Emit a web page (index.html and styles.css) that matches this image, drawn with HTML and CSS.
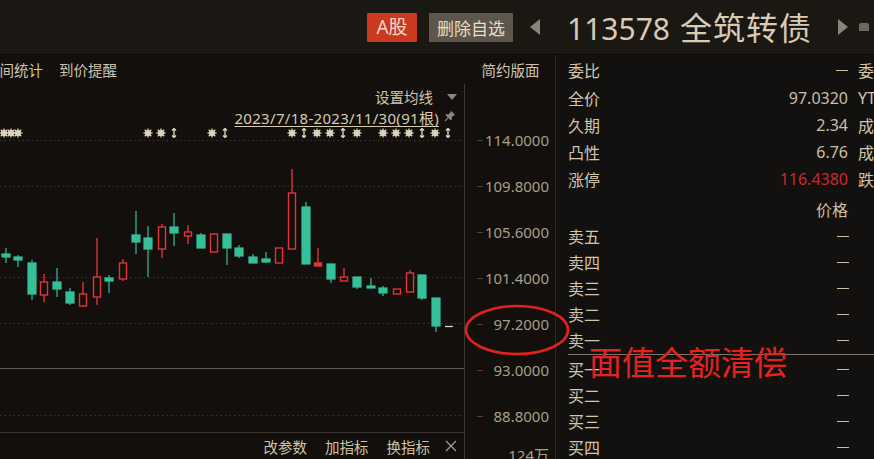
FILE: index.html
```html
<!DOCTYPE html>
<html lang="zh-CN">
<head>
<meta charset="utf-8">
<title>113578 全筑转债</title>
<link rel="stylesheet" href="styles.css">
</head>
<body>
<div class="app">
  <header class="topbar">
    <span class="tag-a">A股</span>
    <span class="tag-del">删除自选</span>
    <span class="arrow-l"></span>
    <h1 class="title"><span class="code">113578</span> <span class="name">全筑转债</span></h1>
    <span class="arrow-r"></span>
    <span class="more"></span>
  </header>
  <div class="main">
    <section class="chart">
      <div class="chart-tools">
        <div class="links"><span class="clip">区间统计</span><span>到价提醒</span></div>
        <span class="layout-btn">简约版面</span>
      </div>
      <div class="chart-body">
        <div class="plot">
          <div class="ma-row"><span>设置均线</span><span class="caret"></span></div>
          <div class="range-row">
            <span class="range">2023/7/18-2023/11/30(91根)</span>
            <svg class="pin" viewBox="0 0 12 12" width="12" height="12"><path d="M7 0.8 L11.2 5 L9.8 5.4 L7.6 7.6 L7.9 9.6 L6.9 10.6 L1.4 5.1 L2.4 4.1 L4.4 4.4 L6.6 2.2 Z" fill="#8e8679"/><path d="M4.3 7.7 L1 11" stroke="#8e8679" stroke-width="1.2"/></svg>
          </div>
          <svg class="candles" viewBox="0 127 464 305" width="464" height="305">
            <defs>
              <symbol id="sun" viewBox="-5 -5 10 10">
                <circle r="3.1" fill="#dcd2bb"/>
                <g stroke="#dcd2bb" stroke-width="1.3">
                  <line x1="0" y1="-4.6" x2="0" y2="4.6"/>
                  <line x1="-4.6" y1="0" x2="4.6" y2="0"/>
                  <line x1="-3.3" y1="-3.3" x2="3.3" y2="3.3"/>
                  <line x1="-3.3" y1="3.3" x2="3.3" y2="-3.3"/>
                </g>
              </symbol>
              <symbol id="updown" viewBox="-5 -5 10 10">
                <path d="M0 -4.5 V4.5 M-2 -2.4 L0 -4.5 L2 -2.4 M-2 2.4 L0 4.5 L2 2.4" stroke="#dcd2bb" stroke-width="1.4" fill="none"/>
              </symbol>
            </defs>
            <g class="grid" stroke="#3a352f" stroke-width="1" stroke-dasharray="1.5 3">
              <line x1="0" y1="140.5" x2="464" y2="140.5"/>
              <line x1="0" y1="186.5" x2="464" y2="186.5"/>
              <line x1="0" y1="277.5" x2="464" y2="277.5"/>
              <line x1="0" y1="323.5" x2="464" y2="323.5"/>
              <line x1="0" y1="415.5" x2="464" y2="415.5"/>
            </g>
            <line x1="0" y1="368.5" x2="464" y2="368.5" stroke="#5f5a52" stroke-width="1.2"/>
            <g class="marks">
              <use href="#sun" x="-1" y="128" width="10" height="10"/>
              <use href="#sun" x="6" y="128" width="10" height="10"/>
              <use href="#sun" x="13" y="128" width="10" height="10"/>
              <use href="#sun" x="143" y="128" width="10" height="10"/>
              <use href="#sun" x="156" y="128" width="10" height="10"/>
              <use href="#updown" x="169" y="128" width="10" height="10"/>
              <use href="#sun" x="207" y="128" width="10" height="10"/>
              <use href="#updown" x="220" y="128" width="10" height="10"/>
              <use href="#sun" x="287" y="128" width="10" height="10"/>
              <use href="#updown" x="299" y="128" width="10" height="10"/>
              <use href="#sun" x="312" y="128" width="10" height="10"/>
              <use href="#sun" x="325" y="128" width="10" height="10"/>
              <use href="#updown" x="338" y="128" width="10" height="10"/>
              <use href="#sun" x="352" y="128" width="10" height="10"/>
              <use href="#sun" x="378" y="128" width="10" height="10"/>
              <use href="#sun" x="391" y="128" width="10" height="10"/>
              <use href="#sun" x="404" y="128" width="10" height="10"/>
              <use href="#updown" x="417" y="128" width="10" height="10"/>
              <use href="#sun" x="430" y="128" width="10" height="10"/>
              <use href="#updown" x="443" y="128" width="10" height="10"/>
            </g>
            <g class="up" stroke="#35c099" fill="#35c099" stroke-width="1.2">
              <line x1="6" y1="248" x2="6" y2="263"/><rect x="2" y="254" width="8" height="3"/>
              <line x1="18" y1="255" x2="18" y2="267"/><rect x="14" y="257" width="8" height="3"/>
              <line x1="32" y1="260" x2="32" y2="300"/><rect x="28" y="263" width="8" height="31"/>
              <line x1="57" y1="268" x2="57" y2="297"/><rect x="53" y="282" width="8" height="7"/>
              <line x1="70" y1="288" x2="70" y2="305"/><rect x="66" y="292" width="8" height="11"/>
              <line x1="109" y1="275" x2="109" y2="293"/><rect x="105" y="278" width="8" height="3"/>
              <line x1="136" y1="211" x2="136" y2="254"/><rect x="132" y="235" width="8" height="7"/>
              <line x1="148" y1="226" x2="148" y2="277"/><rect x="144" y="238" width="8" height="11"/>
              <line x1="174" y1="213" x2="174" y2="246"/><rect x="170" y="227" width="8" height="6"/>
              <line x1="201" y1="233" x2="201" y2="248"/><rect x="197" y="235" width="8" height="13"/>
              <line x1="227" y1="234" x2="227" y2="265"/><rect x="223" y="234" width="8" height="14"/>
              <line x1="239" y1="245" x2="239" y2="258"/><rect x="235" y="248" width="8" height="8"/>
              <line x1="253" y1="254" x2="253" y2="263"/><rect x="249" y="257" width="8" height="6"/>
              <line x1="266" y1="252" x2="266" y2="263"/><rect x="262" y="259" width="8" height="3"/>
              <line x1="306" y1="202" x2="306" y2="264"/><rect x="302" y="207" width="8" height="57"/>
              <line x1="331" y1="264" x2="331" y2="283"/><rect x="327" y="264" width="8" height="15"/>
              <line x1="357" y1="277" x2="357" y2="289"/><rect x="353" y="277" width="8" height="10"/>
              <line x1="371" y1="278" x2="371" y2="288"/><rect x="367" y="286" width="8" height="2"/>
              <line x1="383" y1="286" x2="383" y2="296"/><rect x="379" y="288" width="8" height="5"/>
              <line x1="422" y1="275" x2="422" y2="300"/><rect x="418" y="275" width="8" height="23"/>
              <line x1="436" y1="298" x2="436" y2="332"/><rect x="432" y="298" width="8" height="28"/>
            </g>
            <g class="down" stroke="#df3438" fill="#120f0c" stroke-width="1.4">
              <line x1="44" y1="274" x2="44" y2="302"/><rect x="40.5" y="282" width="7" height="13"/>
              <line x1="83" y1="282" x2="83" y2="307"/><rect x="79.5" y="294" width="7" height="12"/>
              <line x1="97" y1="238" x2="97" y2="305"/><rect x="93.5" y="277" width="7" height="20"/>
              <line x1="123" y1="259" x2="123" y2="281"/><rect x="119.5" y="263" width="7" height="16"/>
              <line x1="162" y1="224" x2="162" y2="258"/><rect x="158.5" y="227" width="7" height="22"/>
              <line x1="188" y1="225" x2="188" y2="244"/><rect x="184.5" y="232" width="7" height="4"/>
              <line x1="214" y1="233" x2="214" y2="252"/><rect x="210.5" y="234" width="7" height="18"/>
              <line x1="279" y1="248" x2="279" y2="263"/><rect x="275.5" y="248" width="7" height="15"/>
              <line x1="292" y1="169" x2="292" y2="249"/><rect x="288.5" y="193" width="7" height="56"/>
              <line x1="318" y1="248" x2="318" y2="266"/><rect x="314.5" y="263" width="7" height="3" fill="#df3438"/>
              <line x1="344" y1="268" x2="344" y2="281"/><rect x="340.5" y="277" width="7" height="4"/>
              <line x1="397" y1="289" x2="397" y2="294"/><rect x="393.5" y="289" width="7" height="5"/>
              <line x1="410" y1="270" x2="410" y2="292"/><rect x="406.5" y="273" width="7" height="19"/>
            </g>
            <line x1="445" y1="326.5" x2="453" y2="326.5" stroke="#ddd5c6" stroke-width="1.3"/>
          </svg>
          <div class="ind-bar">
            <span>改参数</span><span>加指标</span><span>换指标</span>
            <svg class="close" viewBox="0 0 12 12" width="12" height="12"><path d="M1 1 L11 11 M11 1 L1 11" stroke="#a9a192" stroke-width="1.2"/></svg>
          </div>
        </div>
        <div class="axis">
          <div class="tick"><span>114.0000</span></div>
          <div class="tick"><span>109.8000</span></div>
          <div class="tick"><span>105.6000</span></div>
          <div class="tick"><span>101.4000</span></div>
          <div class="tick"><span>97.2000</span></div>
          <div class="tick"><span>93.0000</span></div>
          <div class="tick"><span>88.8000</span></div>
          <div class="vol"><span>124万</span></div>
        </div>
      </div>
    </section>
    <aside class="quote">
      <div class="qrow first"><span class="lb">委比</span><span class="val"><span class="dash"></span></span><span class="ex">委</span></div>
      <div class="stats">
        <div class="qrow"><span class="lb">全价</span><span class="val">97.0320</span><span class="ex">YT</span></div>
        <div class="qrow"><span class="lb">久期</span><span class="val">2.34</span><span class="ex">成</span></div>
        <div class="qrow"><span class="lb">凸性</span><span class="val">6.76</span><span class="ex">成</span></div>
        <div class="qrow"><span class="lb">涨停</span><span class="val red">116.4380</span><span class="ex">跌</span></div>
      </div>
      <div class="qrow head"><span class="lb"></span><span class="val">价格</span><span class="ex"></span></div>
      <div class="book">
        <div class="brow"><span class="lb">卖五</span><span class="dash"></span></div>
        <div class="brow"><span class="lb">卖四</span><span class="dash"></span></div>
        <div class="brow"><span class="lb">卖三</span><span class="dash"></span></div>
        <div class="brow"><span class="lb">卖二</span><span class="dash"></span></div>
        <div class="brow"><span class="lb">卖一</span><span class="dash"></span></div>
        <div class="divider"></div>
        <div class="brow"><span class="lb">买一</span><span class="dash"></span></div>
        <div class="brow"><span class="lb">买二</span><span class="dash"></span></div>
        <div class="brow"><span class="lb">买三</span><span class="dash"></span></div>
        <div class="brow"><span class="lb">买四</span><span class="dash"></span></div>
      </div>
    </aside>
  </div>
  <svg class="mark-ellipse" viewBox="0 0 110 56" width="110" height="56"><ellipse cx="55" cy="28" rx="51" ry="24" fill="none" stroke="#e0221f" stroke-width="2.6"/></svg>
  <div class="mark-text">面值全额清偿</div>
</div>
</body>
</html>
```
FILE: styles.css
```css
* { box-sizing: border-box; }
html, body { margin: 0; padding: 0; }
body {
  background: #120f0c;
  font-family: "Noto Sans", "Noto Sans CJK SC", sans-serif;
  color: #cfc3ab;
}
.app {
  position: relative;
  width: 874px;
  height: 459px;
  overflow: hidden;
  background: #120f0c;
}

/* top bar */
.topbar {
  height: 55px;
  background: #1b1713;
  border-bottom: 1px solid #0c0a08;
  display: flex;
  align-items: center;
  padding-left: 367px;
  white-space: nowrap;
}
.tag-a {
  width: 50px;
  height: 29px;
  background: #c93a1f;
  color: #f4d7c6;
  font-size: 19px;
  line-height: 29px;
  text-align: center;
  border-radius: 1px;
}
.tag-del {
  margin-left: 12px;
  width: 84px;
  height: 29px;
  background: #5c564c;
  color: #e8dcc6;
  font-family: "Noto Sans CJK SC", sans-serif;
  font-size: 17px;
  line-height: 29px;
  text-align: center;
}
.arrow-l {
  margin-left: 17px;
  width: 0;
  height: 0;
  border-top: 8.5px solid transparent;
  border-bottom: 8.5px solid transparent;
  border-right: 10px solid #8b8377;
}
.title {
  margin: 0 0 0 27px;
  font-weight: 400;
  color: #d8cbb3;
  line-height: 40px;
  display: flex;
  align-items: baseline;
  gap: 10px;
}
.title .code { font-family: "Noto Sans", sans-serif; font-size: 30px; }
.title .name { font-family: "Noto Sans CJK SC", sans-serif; font-size: 32px; letter-spacing: 1px; }
.arrow-r {
  margin-left: 26px;
  width: 0;
  height: 0;
  border-top: 8.5px solid transparent;
  border-bottom: 8.5px solid transparent;
  border-left: 10px solid #8b8377;
}
.more {
  margin-left: 11px;
  width: 10px;
  height: 8px;
  background: #6e675c;
  border-radius: 2px 2px 0 0;
}

/* main */
.main {
  display: flex;
  height: 404px;
}
.chart {
  width: 555px;
  flex: none;
  display: flex;
  flex-direction: column;
  overflow: hidden;
}
.chart-tools {
  height: 29px;
  flex: none;
  display: grid;
  grid-template-columns: 464px 91px;
  align-items: center;
  font-family: "Noto Sans CJK SC", sans-serif;
  font-size: 14.5px;
  color: #d0c4ac;
}
.links {
  display: flex;
  gap: 16px;
  margin-left: -15px;
}
.layout-btn {
  text-align: center;
  padding-left: 2px;
}
.chart-body {
  flex: 1;
  min-height: 0;
  overflow: hidden;
  display: grid;
  grid-template-columns: 464px 91px;
}
.plot {
  display: flex;
  flex-direction: column;
  min-width: 0;
}
.ma-row {
  height: 25px;
  flex: none;
  display: flex;
  justify-content: flex-end;
  align-items: center;
  gap: 14px;
  padding-right: 7px;
  font-family: "Noto Sans CJK SC", sans-serif;
  font-size: 14.5px;
  color: #d0c4ac;
}
.caret {
  width: 0;
  height: 0;
  border-left: 5px solid transparent;
  border-right: 5px solid transparent;
  border-top: 6px solid #8f877a;
}
.range-row {
  height: 18px;
  flex: none;
  display: flex;
  justify-content: flex-end;
  align-items: center;
  gap: 5px;
  padding-right: 8px;
}
.range {
  font-size: 15px;
  line-height: 18px;
  color: #d6cab2;
  text-decoration: underline;
  text-underline-offset: 2px;
  letter-spacing: 0.3px;
}
.pin { display: block; margin-top: -5px; }
.candles { display: block; flex: none; }
.ind-bar {
  height: 27px;
  flex: none;
  border-top: 1px solid #3a3530;
  display: flex;
  justify-content: flex-end;
  align-items: center;
  gap: 18px;
  padding-right: 7px;
  font-family: "Noto Sans CJK SC", sans-serif;
  font-size: 14.5px;
  color: #cfc3ab;
}
.ind-bar .close { margin-left: -3px; }

.axis {
  border-left: 1px solid #3d3832;
  padding-top: 33px;
  display: flex;
  flex-direction: column;
}
.tick {
  height: 46px;
  flex: none;
  display: flex;
  align-items: center;
  justify-content: space-between;
  padding-left: 12px;
  padding-right: 6px;
  font-size: 15px;
  color: #a89e8b;
}
.tick::before {
  content: "";
  width: 6px;
  height: 1px;
  background: #4a443d;
}
.vol {
  margin-top: 7px;
  height: 18px;
  flex: none;
  line-height: 18px;
  text-align: right;
  padding-right: 6px;
  font-family: "Noto Sans", "Noto Sans CJK SC", sans-serif;
  font-size: 15px;
  color: #a89e8b;
}

/* quote panel */
.quote {
  width: 319px;
  flex: none;
  border-left: 1px solid #2c2823;
  background: #131110;
  padding-left: 12px;
  padding-top: 2px;
  overflow: hidden;
  font-size: 16px;
}
.qrow {
  width: 330px;
  height: 27px;
  display: grid;
  grid-template-columns: 200px 80px 50px;
  align-items: center;
}
.qrow.first { height: 26px; margin-bottom: 1px; }
.lb {
  font-family: "Noto Sans CJK SC", sans-serif;
  color: #d2c6ae;
}
.val {
  text-align: right;
  color: #cabea6;
}
.qrow.first .val { display: flex; justify-content: flex-end; }
.val.red { color: #d0262c; }
.ex {
  padding-left: 10px;
  font-family: "Noto Sans", "Noto Sans CJK SC", sans-serif;
  color: #d2c6ae;
}
.qrow.head { height: 29px; margin-top: 2px; }
.qrow.head .val { font-family: "Noto Sans CJK SC", sans-serif; color: #cabea6; }
.book { display: flex; flex-direction: column; }
.brow {
  width: 281px;
  height: 26px;
  flex: none;
  display: flex;
  justify-content: space-between;
  align-items: center;
}
.dash {
  display: block;
  width: 12px;
  height: 1px;
  background: #cabea6;
}
.divider {
  height: 1px;
  flex: none;
  margin: 1px -20px 1px 0;
  background: #7b766d;
}

/* annotations */
.mark-ellipse {
  position: absolute;
  left: 462px;
  top: 302px;
}
.mark-text {
  position: absolute;
  left: 589px;
  top: 339px;
  font-family: "Noto Sans CJK SC", sans-serif;
  font-size: 33px;
  line-height: 44px;
  color: #e3231f;
  white-space: nowrap;
}
```
